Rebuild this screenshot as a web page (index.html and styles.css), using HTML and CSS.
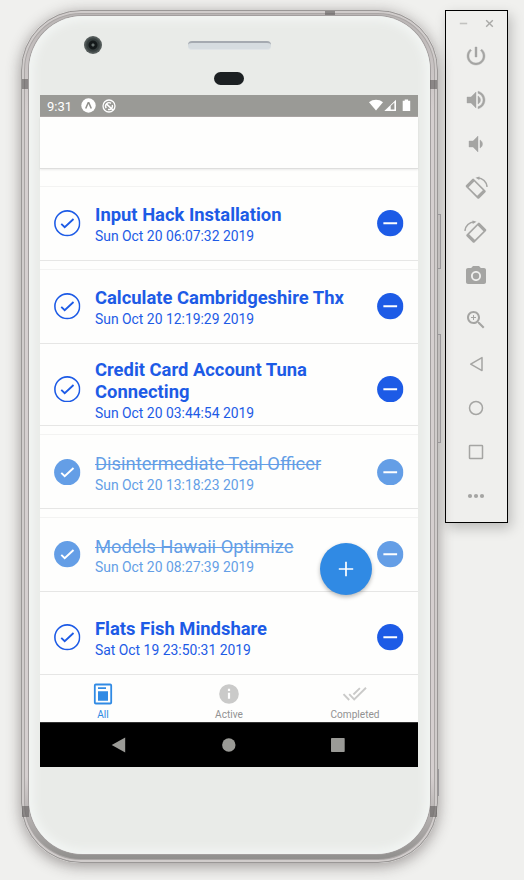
FILE: index.html
```html
<!DOCTYPE html>
<html lang="en">
<head>
<meta charset="utf-8">
<title>Tasks</title>
<link rel="stylesheet" href="styles.css">
</head>
<body>
<svg class="defs" width="0" height="0" aria-hidden="true">
  <symbol id="check-open" viewBox="0 0 27 27"><circle cx="13.5" cy="13.5" r="12.6" fill="none" stroke="currentColor" stroke-width="1.6"/><path d="M7.4 14.1l3.5 3.4L19.9 9.2" fill="none" stroke="currentColor" stroke-width="1.9"/></symbol>
  <symbol id="check-full" viewBox="0 0 27 27"><circle cx="13.5" cy="13.5" r="13.4" fill="currentColor"/><path d="M7.4 14.1l3.5 3.4L19.9 9.2" fill="none" stroke="#fff" stroke-width="2"/></symbol>
  <symbol id="minus" viewBox="0 0 27 27"><circle cx="13.5" cy="13.5" r="13.4" fill="currentColor"/><path d="M6.5 13.5h14" stroke="#fff" stroke-width="2"/></symbol>
</svg>
<main class="desk">
  <section class="phone">
    <i class="band band-top"></i><i class="band band-left"></i><i class="band band-right"></i><i class="band band-bl"></i><i class="band band-br"></i>
    <i class="key key-power"></i><i class="key key-volume"></i><i class="key key-low"></i>
    <div class="face">
      <div class="forehead">
        <i class="camera"></i><i class="speaker"></i><i class="sensor"></i>
      </div>
      <div class="screen">
        <div class="status">
          <span class="clock">9:31</span>
          <svg class="st-expo" width="15" height="15" viewBox="0 0 15 15"><circle cx="7.5" cy="7.5" r="7.2" fill="#fff"/><path d="M4.7 10.5L7.2 4.7h.6l2.5 5.8" fill="none" stroke="#8f8f8b" stroke-width="1.5"/></svg>
          <svg class="st-sync" width="14" height="14" viewBox="0 0 14 14"><circle cx="7" cy="7" r="6" fill="none" stroke="#fff" stroke-width="1.3"/><path d="M4.2 9.2A3.5 3.5 0 0 1 9 4.3M10.3 6A3.5 3.5 0 0 1 6 10.4" fill="none" stroke="#fff" stroke-width="1.4"/><path d="M4.3 4.8l6.7 6.2" stroke="#fff" stroke-width="1.6"/></svg>
          <span class="grow"></span>
          <svg width="42" height="13" viewBox="0 0 42 13"><path d="M0 3.2C4-.1 10-.1 14 3.2L7 11.6z" fill="#fff"/><path d="M15.3 12L27 .7V12z" fill="#fff"/><path d="M21.7 10.5V7l3.7-3.5v7z" fill="#9a9a96"/><path d="M33.7 1.8h2V.6h3.400v1.200h2.100V12h-7.500z" fill="#fff"/></svg>
        </div>
        <div class="appbar"></div>
        <ul class="list">
          <li class="item"><div class="card"><svg class="ic"><use href="#check-open"/></svg><div class="text"><div class="title">Input Hack Installation</div><div class="date">Sun Oct 20 06:07:32 2019</div></div><svg class="ic"><use href="#minus"/></svg></div></li>
          <li class="item"><div class="card"><svg class="ic"><use href="#check-open"/></svg><div class="text"><div class="title">Calculate Cambridgeshire Thx</div><div class="date">Sun Oct 20 12:19:29 2019</div></div><svg class="ic"><use href="#minus"/></svg></div></li>
          <li class="item plain"><div class="card"><svg class="ic"><use href="#check-open"/></svg><div class="text"><div class="title">Credit Card Account Tuna Connecting</div><div class="date">Sun Oct 20 03:44:54 2019</div></div><svg class="ic"><use href="#minus"/></svg></div></li>
          <li class="item done"><div class="card"><svg class="ic"><use href="#check-full"/></svg><div class="text"><div class="title">Disintermediate Teal Officer</div><div class="date">Sun Oct 20 13:18:23 2019</div></div><svg class="ic"><use href="#minus"/></svg></div></li>
          <li class="item done"><div class="card"><svg class="ic"><use href="#check-full"/></svg><div class="text"><div class="title">Models Hawaii Optimize</div><div class="date">Sun Oct 20 08:27:39 2019</div></div><svg class="ic"><use href="#minus"/></svg></div></li>
          <li class="item plain"><div class="card"><svg class="ic"><use href="#check-open"/></svg><div class="text"><div class="title">Flats Fish Mindshare</div><div class="date">Sat Oct 19 23:50:31 2019</div></div><svg class="ic"><use href="#minus"/></svg></div></li>
        </ul>
        <div class="fab"><svg width="16" height="16" viewBox="0 0 16 16"><path d="M8 .8v14.4M.8 8h14.4" stroke="#fff" stroke-width="1.7"/></svg></div>
        <nav class="tabs">
          <div class="tab active"><svg width="22" height="22" viewBox="0 0 22 22"><rect x="2.8" y="1.5" width="16.4" height="19" rx="1" fill="none" stroke="currentColor" stroke-width="1.8"/><path d="M6 4.3h8v1.6H6zM6 8.2h10v9.5H6z" fill="currentColor"/></svg><span>All</span></div>
          <div class="tab"><svg width="22" height="22" viewBox="0 0 22 22"><circle cx="11" cy="11" r="9.8" fill="#cacac9"/><path d="M9.9 5.8h2.2v2.3H9.9zM9.9 9.8h2.2v6H9.9z" fill="#fff"/></svg><span>Active</span></div>
          <div class="tab"><svg width="26" height="22" viewBox="0 0 26 22"><g fill="none" stroke="#cacac9" stroke-width="1.9"><path d="M1.5 11.2l5.7 5.8M7.2 11.2l5 5.2L24 4.8M17.9 5.1L11.4 11.5"/></g></svg><span>Completed</span></div>
        </nav>
        <div class="softkeys">
          <svg viewBox="0 0 16 16"><path d="M14.2.5v15L.7 8z"/></svg>
          <svg viewBox="0 0 16 16"><circle cx="7.8" cy="8" r="6.7"/></svg>
          <svg viewBox="0 0 16 16"><rect x="1" y="1" width="13.700" height="14" rx=".7"/></svg>
        </div>
      </div>
    </div>
  </section>
  <aside class="tools">
    <div class="winctl">
      <svg width="9" height="9" viewBox="0 0 9 9"><path d="M.8 4.500h7.400" stroke="#c2c2c0" stroke-width="1.600"/></svg>
      <svg width="9" height="9" viewBox="0 0 9 9"><path d="M1.200 1.200l6.600 6.600M7.800 1.200L1.200 7.800" stroke="#a9a9a7" stroke-width="1.400"/></svg>
    </div>
    <svg class="tool heavy" viewBox="0 0 24 24"><path d="M13 3h-2v10h2V3zm4.830 2.170l-1.420 1.420C17.990 7.860 19 9.810 19 12c0 3.870-3.130 7-7 7s-7-3.130-7-7c0-2.190 1.010-4.140 2.580-5.420L6.170 5.170C4.230 6.820 3 9.260 3 12c0 4.970 4.030 9 9 9s9-4.030 9-9c0-2.740-1.230-5.180-3.170-6.830z"/></svg>
    <svg class="tool heavy" viewBox="0 0 24 24"><path d="M3 9v6h4l5 5V4L7 9H3zm13.500 3c0-1.770-1.020-3.290-2.500-4.030v8.050c1.480-.73 2.500-2.250 2.500-4.020zM14 3.230v2.060c2.890.86 5 3.540 5 6.710s-2.110 5.850-5 6.710v2.060c4.010-.91 7-4.490 7-8.770s-2.990-7.860-7-8.770z"/></svg>
    <svg class="tool heavy" viewBox="0 0 24 24"><path d="M18.500 12c0-1.770-1.020-3.290-2.500-4.030v8.050c1.480-.73 2.500-2.250 2.500-4.020zM5 9v6h4l5 5V4L9 9H5z"/></svg>
    <svg class="tool" viewBox="0 0 24 24"><g id="rotate"><rect x="5.700" y="3" width="11.200" height="18.600" rx="1.200" transform="rotate(-45 12 12)"/><rect x="7.300" y="6.200" width="8" height="12.200" transform="rotate(-45 12 12)" fill="#efefed"/><path d="M13.600 1.700C18.600 2.100 22.700 5.700 23.100 10.900" fill="none" stroke="#a5a5a3" stroke-width="1.600"/><path d="M11.500 1.700l4-1.300-.2 3.600z"/></g></svg>
    <svg class="tool flip" viewBox="0 0 24 24"><use href="#rotate"/></svg>
    <svg class="tool" viewBox="0 0 24 24"><path fill-rule="evenodd" d="M9 2L7.170 4H4c-1.100 0-2 .9-2 2v12c0 1.100.9 2 2 2h16c1.100 0 2-.9 2-2V6c0-1.100-.9-2-2-2h-3.170L15 2H9zm3 15c-2.760 0-5-2.240-5-5s2.240-5 5-5 5 2.240 5 5-2.240 5-5 5z"/><circle cx="12" cy="12" r="3.200"/></svg>
    <svg class="tool" viewBox="0 0 24 24"><path d="M15.500 14h-.79l-.28-.27C15.410 12.590 16 11.110 16 9.500 16 5.910 13.090 3 9.500 3S3 5.910 3 9.500 5.910 16 9.500 16c1.610 0 3.090-.59 4.230-1.570l.27.28v.79l5 4.990L20.490 19l-4.990-5zm-6 0C7.010 14 5 11.990 5 9.500S7.010 5 9.500 5 14 7.010 14 9.500 11.990 14 9.500 14zM12 10h-2v2H9v-2H7V9h2V7h1v2h2v1z"/></svg>
    <svg class="tool line" viewBox="0 0 24 24"><path d="M18 5.600v13L6.700 12.100z"/></svg>
    <svg class="tool line" viewBox="0 0 24 24"><circle cx="12" cy="12" r="6.500"/></svg>
    <svg class="tool line" viewBox="0 0 24 24"><rect x="5.500" y="5.500" width="13" height="13" rx=".6"/></svg>
    <svg class="tool" viewBox="0 0 24 24"><circle cx="6" cy="12" r="2.100"/><circle cx="12" cy="12" r="2.100"/><circle cx="18" cy="12" r="2.100"/></svg>
  </aside>
</main>
</body>
</html>
```
FILE: styles.css
```css
* { box-sizing: border-box; }
body { margin: 0; background: #f0f0ee; font-family: Roboto, "Liberation Sans", sans-serif; }
.defs { position: absolute; }
.desk { display: flex; align-items: flex-start; gap: 7px; height: 880px; padding: 10px 0 0 21px; overflow: hidden; }

.phone {
  position: relative;
  width: 417px; height: 853px; flex: none;
  padding: 6px 8px 9px;
  border-radius: 60px;
  background: linear-gradient(#b9b5b4, #d5cfcf 12%, #d5cfcf 90%, #8e8d8b);
  border: 1px solid #9a9796;
  box-shadow: inset 0 0 0 2px #d0cccb, inset 0 0 0 3px #aaa6a5, 0 3px 14px 1px rgba(60, 50, 50, .42);
}
.face {
  height: 838px;
  margin: -1px -1px 0;
  padding: 79px 11px 0;
  border-radius: 54px;
  background: #e9ebe8;
  box-shadow: inset 0 0 8px 5px #f2f5f3, 0 0 0 1px #a29e9e;
}
.forehead i { position: absolute; }
.camera { left: 62px; top: 25px; width: 18px; height: 18px; border-radius: 50%; background: radial-gradient(circle, #66706e 0 1px, #14191a 2px 4px, #353d3d 5px 6px, #555c5b 8px); }
.speaker { left: 166px; top: 30px; width: 83px; height: 9px; border-radius: 4px; background: #d6dce0; border-top: 2px solid #a5aab1; border-bottom: 1px solid #e0e4e7; }
.sensor { left: 192px; top: 61px; width: 30px; height: 13px; border-radius: 7px; background: #1c2022; }
.band { position: absolute; background: rgba(95, 92, 92, .6); }
.band-top { left: 303px; top: 0; width: 10px; height: 4px; }
.band-left { left: 0; top: 68px; width: 6px; height: 10px; }
.band-right { right: 0; top: 69px; width: 7px; height: 9px; }
.band-bl { left: 0; bottom: 45px; width: 7px; height: 11px; }
.band-br { right: 0; bottom: 45px; width: 7px; height: 11px; }
.key { position: absolute; right: -4px; width: 3px; background: #c3bfbe; border: 1px solid #99979a; border-left: 0; }
.key-power { top: 203px; height: 55px; }
.key-volume { top: 323px; height: 109px; }
.key-low { top: 758px; height: 27px; width: 1px; right: -2px; }

.screen { position: relative; width: 378px; height: 672px; background: #fefefd; display: flex; flex-direction: column; }
.status { height: 22px; flex: none; display: flex; align-items: center; padding: 0 7px; background: #9a9a96; color: #fff; border-bottom: 1px solid #aaa5a4; }
.clock { width: 34px; font-size: 13px; padding-top: 1px; }
.st-expo { margin-right: 6px; }
.grow { flex: 1; }
.appbar { height: 52px; flex: none; border-bottom: 1px solid #dededd; box-shadow: 0 1px 2px rgba(0, 0, 0, .08); }
.list { list-style: none; margin: 0; padding: 9px 0 0; flex: none; height: 506px; }
.item { height: 82.8px; padding-top: 8px; border-bottom: 1px solid #e6e6e5; color: #1d5be6; }
.card { height: 74px; display: flex; align-items: center; padding: 0 14.5px 0 14px; border-top: 1px solid #f3f3f2; }
.plain .card { border-top-color: transparent; }
.ic { width: 26.5px; height: 26.5px; flex: none; }
.text { flex: 1; margin-left: 14.5px; padding-top: 4.600px; }
.title { width: 255px; font-size: 18.400px; font-weight: 700; line-height: 21.700px; }
.date { font-size: 13.900px; line-height: 21px; }
.done { color: #649ee6; }
.done .title { font-weight: 400; text-decoration: line-through; text-decoration-thickness: 1px; }
.fab { position: absolute; left: 280px; top: 448px; width: 52px; height: 52px; border-radius: 50%; background: #308ae4; display: flex; align-items: center; justify-content: center; box-shadow: 0 2px 4px rgba(0, 0, 0, .28); }
.tabs { height: 48px; flex: none; display: flex; border-bottom: 1px solid #333; }
.tab { flex: 1; display: flex; flex-direction: column; align-items: center; padding-top: 8px; font-size: 10.100px; line-height: 14px; color: #929292; gap: 3px; }
.tab svg { flex: none; }
.tab.active { color: #308ae4; }
.softkeys { flex: 1; background: #000; display: flex; align-items: center; justify-content: space-between; padding: 0 72px 1px 71px; }
.softkeys svg { width: 16px; height: 16px; fill: #9a9a96; }

.tools { width: 63px; height: 513px; flex: none; background: #efefed; border: 1px solid #000; box-shadow: 3px 5px 12px rgba(0, 0, 0, .22); display: flex; flex-direction: column; align-items: center; gap: 20px; padding-right: 1px; }
.winctl { display: flex; justify-content: space-between; width: 35px; height: 9px; margin: 8px 0 -4px; }
.tool { width: 24px; height: 24px; flex: none; fill: #a5a5a3; }
.heavy { stroke: #a5a5a3; stroke-width: .4px; }
.line { fill: none; stroke: #a5a5a3; stroke-width: 1.500px; stroke-linejoin: round; }
.flip { transform: scaleX(-1); }
```
